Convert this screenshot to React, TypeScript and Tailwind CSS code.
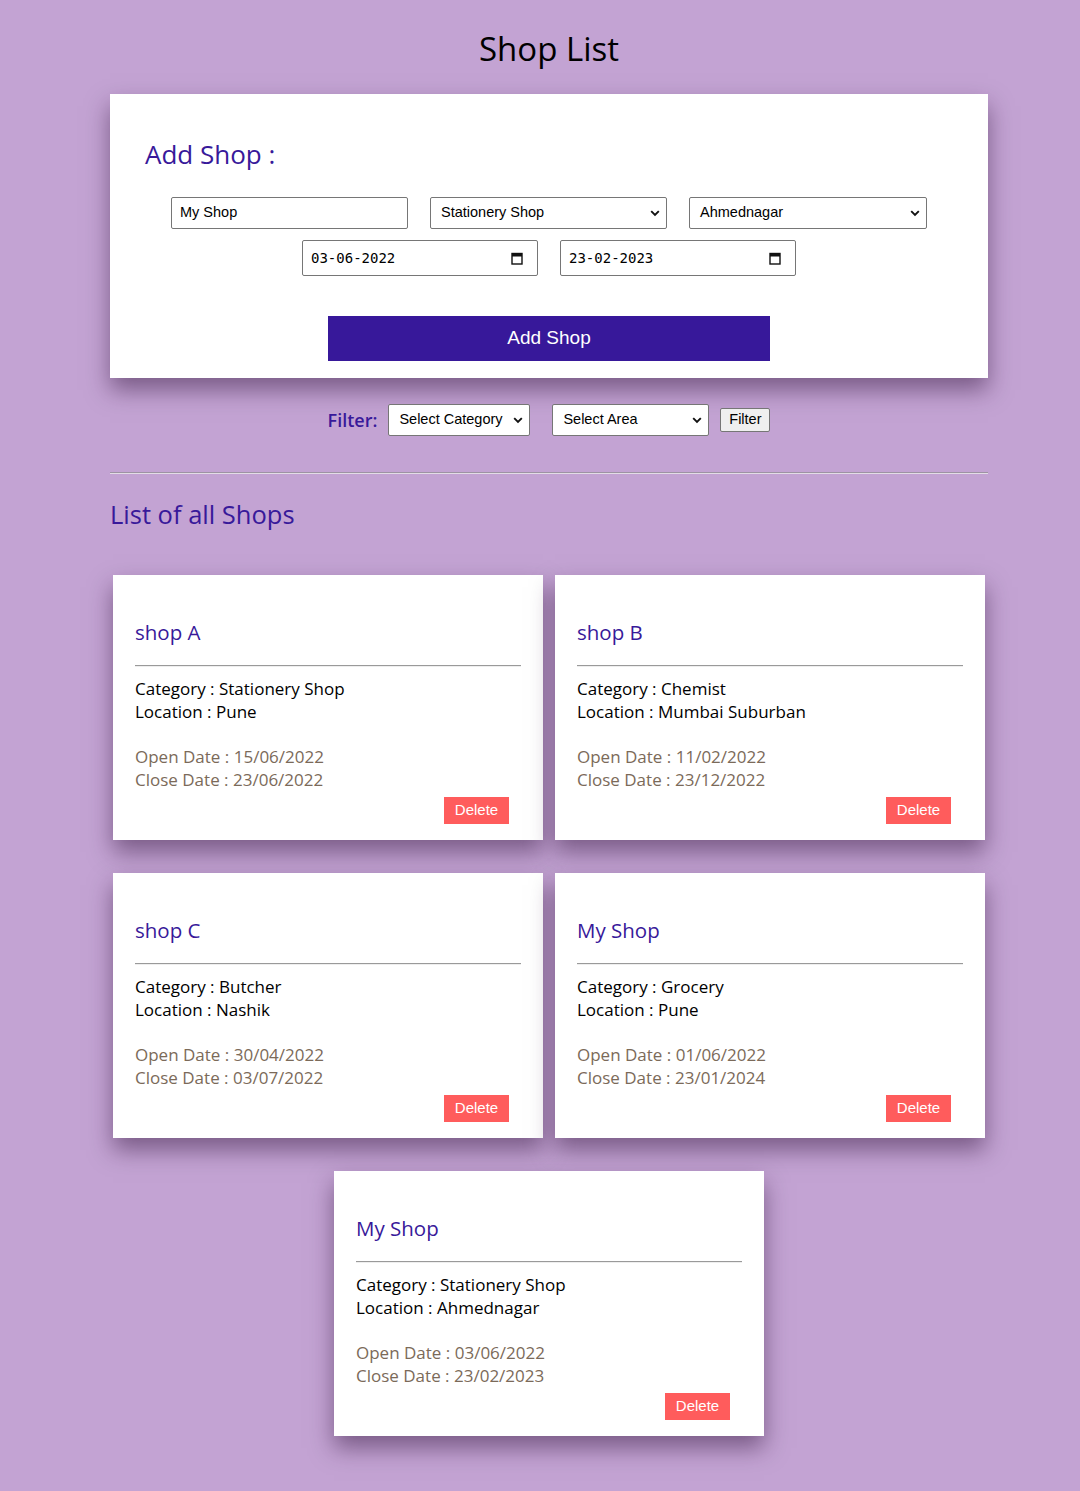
import React from "react";

const Chevron = () => (
  <svg width="10" height="7" viewBox="0 0 10 7" className="shrink-0">
    <path d="M1.2 1.2 L5 5 L8.8 1.2" fill="none" stroke="#111" strokeWidth="1.9" />
  </svg>
);

const Calendar = () => (
  <svg width="12" height="13" viewBox="0 0 12 13" className="shrink-0">
    <rect x="1" y="1.5" width="10" height="10.5" fill="none" stroke="#111" strokeWidth="1.4" />
    <rect x="1" y="1.5" width="10" height="3" fill="#111" />
  </svg>
);

function FakeSelect({ label, w, h = 32 }: { label: string; w: number; h?: number }) {
  return (
    <div
      className="flex items-center justify-between border border-[#767676] rounded-[2px] bg-white pl-[10px] pr-[6px] font-['Liberation_Sans',Arial,sans-serif] text-[14.5px] text-black"
      style={{ width: w, height: h }}
    >
      <span>{label}</span>
      <Chevron />
    </div>
  );
}

function FakeDate({ value }: { value: string }) {
  return (
    <div className="flex items-center justify-between w-[236px] h-[36px] border border-[#767676] rounded-[2px] bg-white pl-[8px] pr-[14px]">
      <span className="font-['DejaVu_Sans_Mono','Liberation_Mono',monospace] text-[14px] text-black">{value}</span>
      <Calendar />
    </div>
  );
}

type Shop = { name: string; cat: string; loc: string; open: string; close: string };

const shops: Shop[] = [
  { name: "shop A", cat: "Stationery Shop", loc: "Pune", open: "15/06/2022", close: "23/06/2022" },
  { name: "shop B", cat: "Chemist", loc: "Mumbai Suburban", open: "11/02/2022", close: "23/12/2022" },
  { name: "shop C", cat: "Butcher", loc: "Nashik", open: "30/04/2022", close: "03/07/2022" },
  { name: "My Shop", cat: "Grocery", loc: "Pune", open: "01/06/2022", close: "23/01/2024" },
  { name: "My Shop", cat: "Stationery Shop", loc: "Ahmednagar", open: "03/06/2022", close: "23/02/2023" },
];

function ShopCard({ s }: { s: Shop }) {
  return (
    <div className="w-[430px] h-[265px] bg-white shadow-[0_12px_22px_rgba(50,20,60,0.5)] pt-[42px] px-[22px]">
      <div className="text-[20.5px] leading-[30px] text-[#38199a]">{s.name}</div>
      <div className="mt-[18px] h-[2px] border-t border-[#9a9a9a] border-b border-b-[#eeeeee]" />
      <div className="mt-[10px] text-[17px] leading-[23px] text-black">
        <div>Category : {s.cat}</div>
        <div>Location : {s.loc}</div>
      </div>
      <div className="mt-[22px] text-[17px] leading-[23px] text-[#7b6a59]">
        <div>Open Date : {s.open}</div>
        <div>Close Date : {s.close}</div>
      </div>
      <div className="flex justify-end pr-[12px] mt-[6px]">
        <div className="w-[65px] h-[27px] bg-[#ff5c5c] text-white flex items-center justify-center font-['Liberation_Sans',Arial,sans-serif] text-[15px]">
          Delete
        </div>
      </div>
    </div>
  );
}

export default function App() {
  return (
    <div className="min-h-[1491px] bg-[#c3a3d3] font-['Open_Sans',sans-serif] pt-[27px]">
      <div className="ml-[110px] w-[878px]">
        <h1 className="text-center text-[33px] leading-[44px] text-black">Shop List</h1>

        <div className="mt-[23px] h-[284px] bg-white shadow-[0_12px_22px_rgba(50,20,60,0.5)] pt-[42px]">
          <div className="pl-[35px] text-[26px] leading-[36px] text-[#38199a]">Add Shop :</div>
          <div className="flex justify-center gap-[22px] mt-[25px]">
            <div className="w-[237px] h-[32px] border border-[#767676] rounded-[2px] bg-white pl-[8px] flex items-center font-['Liberation_Sans',Arial,sans-serif] text-[14.5px] text-black">
              My Shop
            </div>
            <FakeSelect label="Stationery Shop" w={237} />
            <FakeSelect label="Ahmednagar" w={238} />
          </div>
          <div className="flex justify-center gap-[22px] mt-[11px]">
            <FakeDate value="03-06-2022" />
            <FakeDate value="23-02-2023" />
          </div>
          <div className="flex justify-center mt-[40px]">
            <div className="w-[442px] h-[45px] bg-[#37189a] text-white flex items-center justify-center font-['Liberation_Sans',Arial,sans-serif] text-[19px]">
              Add Shop
            </div>
          </div>
        </div>

        <div className="mt-[26px] flex justify-center items-center">
          <span className="text-[18px] font-semibold text-[#38199a] mr-[11px]">Filter:</span>
          <FakeSelect label="Select Category" w={142} />
          <div className="w-[22px]" />
          <FakeSelect label="Select Area" w={157} />
          <div className="w-[11px]" />
          <div className="w-[50px] h-[24px] border border-[#767676] rounded-[2px] bg-[#efefef] flex items-center justify-center font-['Liberation_Sans',Arial,sans-serif] text-[14.5px] text-black">
            Filter
          </div>
        </div>

        <div className="mt-[36px] h-[2px] border-t border-[#9d93a3] border-b border-b-[#e3dce6]" />

        <h2 className="mt-[22px] text-[25.5px] leading-[36px] text-[#38199a]">List of all Shops</h2>

        <div className="mt-[43px] flex flex-wrap justify-center gap-x-[12px] gap-y-[33px]">
          {shops.map((s, i) => (
            <ShopCard key={i} s={s} />
          ))}
        </div>
      </div>
    </div>
  );
}
